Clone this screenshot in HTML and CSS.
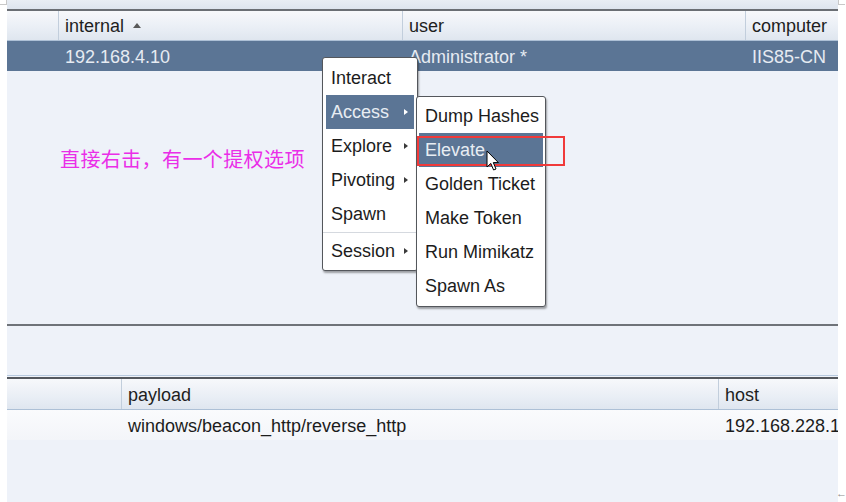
FILE: index.html
```html
<!DOCTYPE html>
<html>
<head>
<meta charset="utf-8">
<link rel="stylesheet" href="styles.css">
</head>
<body>
<div class="corner corner-l"></div>
<div class="corner corner-r"></div>
<div class="frame">
  <div class="topstrip"></div>
  <div class="grid head top-cols">
    <div class="cell"></div>
    <div class="cell">internal<span class="sort"></span></div>
    <div class="cell">user</div>
    <div class="cell">computer</div>
  </div>
  <div class="grid row selected top-cols">
    <div class="cell"></div>
    <div class="cell">192.168.4.10</div>
    <div class="cell">Administrator *</div>
    <div class="cell">IIS85-CN</div>
  </div>
  <div class="upper-body">
    <p class="note">直接右击，有一个提权选项</p>
  </div>
  <div class="mid"></div>
  <div class="grid head bottom-cols">
    <div class="cell"></div>
    <div class="cell">payload</div>
    <div class="cell">host</div>
  </div>
  <div class="grid row plain bottom-cols">
    <div class="cell"></div>
    <div class="cell">windows/beacon_http/reverse_http</div>
    <div class="cell">192.168.228.1</div>
  </div>
  <div class="lower-body"></div>
</div>

<div class="menu main-menu">
  <div class="item">Interact</div>
  <div class="item active sub">Access</div>
  <div class="item sub">Explore</div>
  <div class="item sub">Pivoting</div>
  <div class="item">Spawn</div>
  <div class="sep"></div>
  <div class="item sub">Session</div>
</div>

<div class="menu sub-menu">
  <div class="item">Dump Hashes</div>
  <div class="item active">Elevate</div>
  <div class="item">Golden Ticket</div>
  <div class="item">Make Token</div>
  <div class="item">Run Mimikatz</div>
  <div class="item">Spawn As</div>
</div>

<div class="redbox"></div>

<svg class="cursor" width="14" height="22" viewBox="0 0 14 22">
  <path d="M1 1 L1 17 L4.8 13.4 L7.6 20 L10 19 L7.3 12.6 L12.4 12.6 Z" fill="#fff" stroke="#000" stroke-width="1" stroke-linejoin="round"/>
</svg>

<div class="back-arrow">←</div>
</body>
</html>
```

FILE: styles.css
```css
html, body {
  margin: 0;
  padding: 0;
  background: #ffffff;
}

body {
  width: 846px;
  height: 502px;
  overflow: hidden;
  position: relative;
  font-family: "Liberation Sans", Arial, sans-serif;
  font-size: 18px;
  color: #1c1c1c;
}

.frame {
  margin-left: 7px;
  width: 831px;
  height: 502px;
  display: flex;
  flex-direction: column;
  background: #eef2f9;
}

.topstrip {
  height: 9px;
  flex: none;
  background: linear-gradient(#e8edf4, #dde4ee);
  border-bottom: 2px solid #6a6e74;
}

.grid {
  display: grid;
  flex: none;
}

.top-cols {
  grid-template-columns: 51px 344px 343px 1fr;
}

.bottom-cols {
  grid-template-columns: 114px 597px 1fr;
}

.cell {
  padding-left: 6px;
  padding-top: 2px;
  box-sizing: border-box;
  border-left: 1px solid transparent;
  white-space: nowrap;
  overflow: hidden;
  display: flex;
  align-items: center;
}

.cell:first-child {
  border-left: none;
}

.head {
  height: 29px;
  background: linear-gradient(#f7f8fb, #e9eef5 60%, #dfe6ef);
  border-bottom: 1px solid #adc0d6;
  color: #1e1e1e;
}

.head .cell {
  border-left-color: #c2cedc;
}

.head .cell:first-child {
  border-left: none;
}

.row {
  height: 30px;
}

.selected {
  background: #5b7595;
  color: #e6ebf2;
}

.plain {
  background: linear-gradient(#fafbfd, #f3f5f9);
}

.sort {
  display: inline-block;
  width: 0;
  height: 0;
  margin-left: 9px;
  margin-top: -2px;
  border-left: 4px solid transparent;
  border-right: 4px solid transparent;
  border-bottom: 5px solid #5a5a5a;
}

.upper-body {
  flex: none;
  height: 255px;
  border-bottom: 2px solid #6f7379;
  box-sizing: border-box;
  padding: 76px 0 0 53px;
}

.note {
  margin: 0;
  font-family: "Noto Sans CJK SC", "Noto Sans", sans-serif;
  font-size: 20px;
  line-height: 24px;
  color: #ea2ee8;
  letter-spacing: 0.4px;
}

.mid {
  flex: none;
  height: 50px;
  border-bottom: 1px solid #b7c9de;
  box-sizing: border-box;
}

.mid + .head {
  border-top: 2px solid #54585e;
  margin-top: 1px;
  height: 30px;
}

.lower-body {
  flex: 1;
}

/* context menus */
.menu {
  position: absolute;
  background: #ffffff;
  border: 1px solid #54575c;
  border-radius: 3px;
  box-shadow: 1px 2px 2px rgba(0, 0, 0, 0.35);
  box-sizing: border-box;
  color: #1c1c1c;
}

.main-menu {
  left: 322px;
  top: 57px;
  width: 96px;
  height: 214px;
  padding: 3px 3px 2px 3px;
}

.sub-menu {
  left: 416px;
  top: 96px;
  width: 130px;
  height: 211px;
  padding: 2px 2px 3px 2px;
}

.item {
  height: 34px;
  display: flex;
  align-items: center;
  padding-left: 5px;
  position: relative;
  white-space: nowrap;
}

.sub-menu .item {
  padding-left: 6px;
}

.item.active {
  background: #5b7595;
  color: #e8edf3;
}

.item.sub::after {
  content: "";
  position: absolute;
  right: 6px;
  top: 14px;
  width: 0;
  height: 0;
  border-top: 3px solid transparent;
  border-bottom: 3px solid transparent;
  border-left: 4px solid #3a3a3a;
}

.item.active.sub::after {
  border-left-color: #ffffff;
}

.sep {
  height: 1px;
  margin: 1px -3px 1px -3px;
  background: #d5d9df;
}

.redbox {
  position: absolute;
  left: 417px;
  top: 136px;
  width: 148px;
  height: 30px;
  border: 2px solid #f03a3a;
  box-sizing: border-box;
}

.cursor {
  position: absolute;
  left: 486px;
  top: 150px;
}

.corner {
  position: absolute;
  top: 0;
  width: 7px;
  height: 5px;
  box-sizing: border-box;
}

.corner-l {
  left: 0;
  border-right: 1px solid #c8c8c8;
  border-bottom: 1px solid #c8c8c8;
}

.corner-r {
  left: 838px;
  border-left: 1px solid #c8c8c8;
  border-bottom: 1px solid #c8c8c8;
}

.back-arrow {
  position: absolute;
  left: 836px;
  top: 486px;
  font-size: 11px;
  line-height: 14px;
  color: #8a8a8a;
}
```
